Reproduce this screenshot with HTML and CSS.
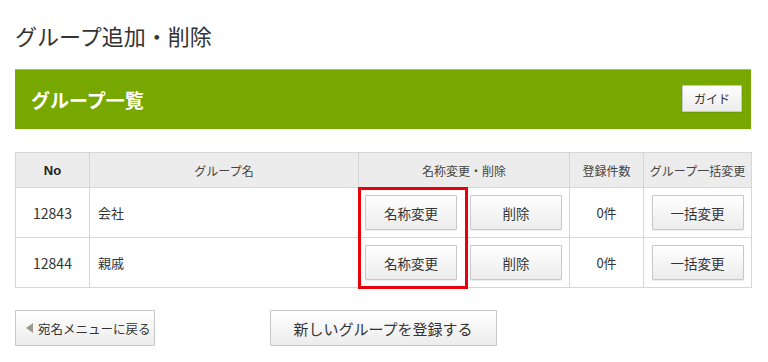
FILE: index.html
```html
<!DOCTYPE html>
<html lang="ja">
<head>
<meta charset="utf-8">
<link rel="stylesheet" href="styles.css">
</head>
<body>
<div class="page">
  <h1 class="title">グループ追加・削除</h1>
  <div class="bar">
    <h2 class="bar-title">グループ一覧</h2>
    <button class="btn btn-guide">ガイド</button>
  </div>
  <div class="table-wrap">
    <table class="groups">
      <colgroup>
        <col class="c-no"><col class="c-name"><col class="c-edit"><col class="c-count"><col class="c-bulk">
      </colgroup>
      <thead>
        <tr>
          <th class="h-no">No</th>
          <th>グループ名</th>
          <th>名称変更・削除</th>
          <th>登録件数</th>
          <th>グループ一括変更</th>
        </tr>
      </thead>
      <tbody>
        <tr>
          <td class="num">12843</td>
          <td class="name">会社</td>
          <td><div class="pair"><button class="btn btn-cell">名称変更</button><button class="btn btn-cell">削除</button></div></td>
          <td class="center">0件</td>
          <td class="center"><button class="btn btn-cell">一括変更</button></td>
        </tr>
        <tr>
          <td class="num">12844</td>
          <td class="name">親戚</td>
          <td><div class="pair"><button class="btn btn-cell">名称変更</button><button class="btn btn-cell">削除</button></div></td>
          <td class="center">0件</td>
          <td class="center"><button class="btn btn-cell">一括変更</button></td>
        </tr>
      </tbody>
    </table>
    <div class="highlight"></div>
  </div>
  <div class="actions">
    <button class="btn btn-back"><span class="tri"></span>宛名メニューに戻る</button>
    <button class="btn btn-new">新しいグループを登録する</button>
    <span></span>
  </div>
</div>
</body>
</html>
```

FILE: styles.css
```css
* { box-sizing: border-box; }
html, body { margin: 0; padding: 0; background: #fff; }
body {
  font-family: "Noto Sans CJK JP", "Noto Sans", sans-serif;
  color: #333;
}
.page {
  width: 736px;
  margin-left: 15px;
  padding-top: 20px;
}
.title {
  margin: 0 0 19px 0;
  font-size: 22px;
  line-height: 30px;
  font-weight: normal;
  color: #333;
}
.bar {
  height: 60px;
  background: #77a800;
  border-top: 1px solid #a3c64d;
  display: flex;
  align-items: center;
  justify-content: space-between;
  padding: 0 9px 0 16px;
}
.bar-title {
  margin: 0;
  font-size: 19px;
  font-weight: bold;
  color: #fff;
  line-height: 26px;
}
.btn {
  font-family: "Noto Sans CJK JP", "Noto Sans", sans-serif;
  color: #333;
  background: linear-gradient(#ffffff, #ececec);
  border: 1px solid #c8c8c8;
  border-radius: 1px;
  box-shadow: 0 1px 1px rgba(0,0,0,0.08);
  padding: 0;
  cursor: pointer;
}
.btn-guide {
  width: 60px;
  height: 27px;
  font-size: 12px;
  margin-top: -3px;
}
.table-wrap {
  position: relative;
  margin-top: 23px;
}
.groups {
  width: 736px;
  border-collapse: collapse;
  table-layout: fixed;
  font-size: 13px;
}
.c-no { width: 74px; }
.c-name { width: 269px; }
.c-edit { width: 211px; }
.c-count { width: 74px; }
.c-bulk { width: 108px; }
.groups th, .groups td {
  border: 1px solid #d6d6d6;
  padding: 0;
}
.groups th {
  background: #ececec;
  height: 35px;
  font-size: 12px;
  font-weight: normal;
  color: #444;
  text-align: center;
}
.groups th.h-no {
  font-family: "Liberation Sans", Arial, sans-serif;
  font-weight: bold;
  font-size: 13px;
  color: #222;
}
.groups td {
  height: 50px;
  vertical-align: middle;
}
.groups td.num {
  text-align: center;
  font-size: 14px;
}
.groups td.name {
  padding-left: 8px;
}
.groups td.center { text-align: center; }
.pair {
  display: flex;
  justify-content: center;
  gap: 13px;
  padding-right: 1px;
}
.btn-cell {
  width: 92px;
  height: 35px;
  font-size: 13.5px;
  vertical-align: middle;
}
.highlight {
  position: absolute;
  left: 343px;
  top: 35px;
  width: 110px;
  height: 102px;
  border: 3px solid #e8000b;
  pointer-events: none;
}
.actions {
  margin-top: 22px;
  display: grid;
  grid-template-columns: 1fr auto 1fr;
  align-items: center;
}
.btn-back {
  justify-self: start;
  width: 140px;
  height: 36px;
  font-size: 12.5px;
  display: flex;
  align-items: center;
  padding-left: 10px;
  gap: 5px;
}
.tri {
  width: 0;
  height: 0;
  border-top: 5px solid transparent;
  border-bottom: 5px solid transparent;
  border-right: 7px solid #9a9a90;
}
.btn-new {
  width: 227px;
  height: 36px;
  font-size: 15px;
}
```
